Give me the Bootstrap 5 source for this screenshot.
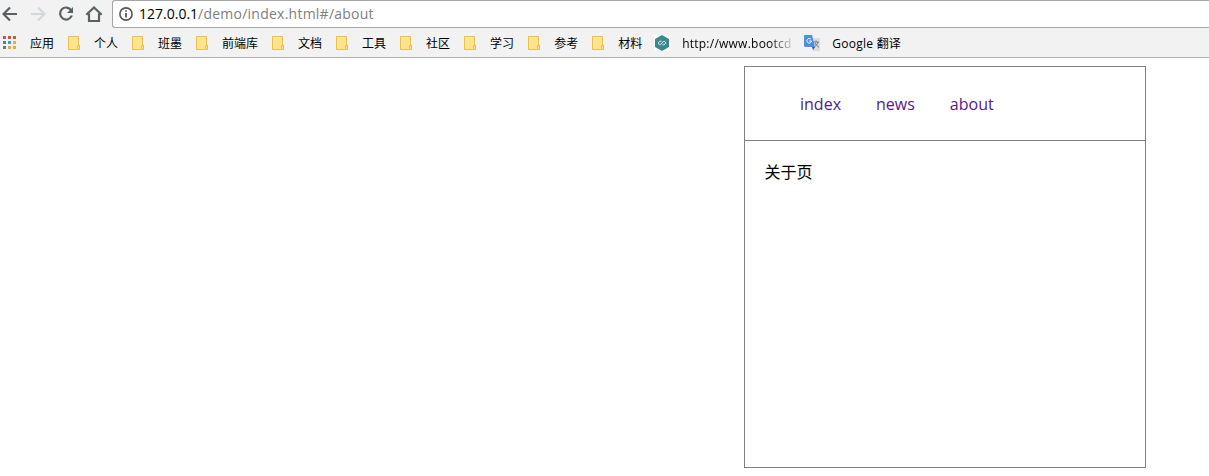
<!DOCTYPE html>
<html lang="zh-CN">
<head>
<meta charset="utf-8">
<title>index</title>
<link href="https://cdn.jsdelivr.net/npm/bootstrap@5.3.0/dist/css/bootstrap.min.css" rel="stylesheet">
<style>
body{font-family:"Open Sans","Noto Sans CJK SC",sans-serif;color:#000;height:476px;overflow:hidden;background:#fff}
.chrome{background:#f2f2f2;height:58px;border-bottom:1px solid #b0b0b0}
.toolbar{height:28px}
.tools{width:112px;padding-left:2px;gap:12px}
.home{margin-left:-1px}
.omnibox{height:28px;border:1px solid #a6a6a6;border-right:0;border-radius:3px 0 0 3px;padding-left:6px;font-size:14px;line-height:26px;background:#fff}
.address{margin-left:6px;letter-spacing:0;white-space:nowrap}
.address span{color:#808080;letter-spacing:.24px}
.bookmarks{height:29px;padding-left:2px;gap:12px;font-size:12px;line-height:16px;white-space:nowrap}
.bookmark{gap:12px}
.bookmark svg{flex:none}
.bookmark span{padding-top:2px}
.fade-label{width:110px;letter-spacing:.24px;-webkit-mask-image:linear-gradient(90deg,#000 80%,rgba(0,0,0,.15));mask-image:linear-gradient(90deg,#000 80%,rgba(0,0,0,.15))}
.latin-label{letter-spacing:.3px}
.panel{width:402px;height:402px;margin:8px 0 0 744px;border:1px solid #808080}
.panel-nav{height:74px;border-bottom:1px solid #808080;padding-left:55px;gap:35px;font-size:16px;line-height:24px}
.panel-nav a{color:#551a8b;text-decoration:none}
.panel-body{padding:19px 19.500px;font-size:16px;line-height:24px}
</style>
<script src="https://cdn.jsdelivr.net/npm/bootstrap@5.3.0/dist/js/bootstrap.bundle.min.js"></script>
</head>
<body>
<svg class="d-none">
<symbol id="folder" viewBox="0 0 16 16"><path d="M2.5 1.5h10v9h1v4h-11z" fill="#ffe48f" stroke="#e8c34a"/><path d="M11.5 14.5v-4h2v4z" fill="#ffe48f" stroke="#e8c34a"/></symbol>
</svg>
<header class="chrome">
  <div class="toolbar d-flex">
    <div class="tools d-flex align-items-center flex-shrink-0">
      <svg width="16" height="16" fill="none" stroke="#5a5f61" stroke-width="2.200"><path d="M15 8H2.500M8 1.500 1.500 8 8 14.500"/></svg>
      <svg width="16" height="16" fill="none" stroke="#d3d8da" stroke-width="2.200"><path d="M1 8h12.500M8 1.500 14.500 8 8 14.500"/></svg>
      <svg width="16" height="16" fill="none" stroke="#5a5f61" stroke-width="2.200"><path d="M13.200 4.300A6 6 0 1 0 13.800 9.500"/><path d="M15 1v6H9z" fill="#5a5f61" stroke="none"/></svg>
      <svg class="home" width="18" height="16" fill="none" stroke="#5a5f61" stroke-width="2.200"><path d="M1.300 8.700 9 1.500l7.700 7.200M4 7.500V15h10V7.500"/></svg>
    </div>
    <div class="omnibox d-flex align-items-center flex-grow-1">
      <svg width="14" height="14" fill="none" stroke="#555" stroke-width="1.600"><circle cx="7" cy="7" r="6.100"/><path d="M7 6v4.500M7 3.300v1.500" stroke-width="1.800"/></svg>
      <div class="address">127.0.0.1<span>/demo/index.html#/about</span></div>
    </div>
  </div>
  <nav class="bookmarks d-flex align-items-center">
    <div class="bookmark d-flex align-items-center"><svg width="16" height="16"><path d="M1 1h3v3H1zM6 1h3v3H6zM11 1h3v3h-3z" fill="#c45a3b"/><path d="M1 6h3v3H1zM1 11h3v3H1z" fill="#3f8b8b"/><path d="M6 6h3v3H6z" fill="#4a8fe0"/><path d="M11 6h3v3h-3zM6 11h3v3H6zM11 11h3v3h-3z" fill="#eaae2c"/></svg><span>应用</span></div>
    <div class="bookmark d-flex align-items-center"><svg width="16" height="16"><use href="#folder"/></svg><span>个人</span></div>
    <div class="bookmark d-flex align-items-center"><svg width="16" height="16"><use href="#folder"/></svg><span>班墨</span></div>
    <div class="bookmark d-flex align-items-center"><svg width="16" height="16"><use href="#folder"/></svg><span>前端库</span></div>
    <div class="bookmark d-flex align-items-center"><svg width="16" height="16"><use href="#folder"/></svg><span>文档</span></div>
    <div class="bookmark d-flex align-items-center"><svg width="16" height="16"><use href="#folder"/></svg><span>工具</span></div>
    <div class="bookmark d-flex align-items-center"><svg width="16" height="16"><use href="#folder"/></svg><span>社区</span></div>
    <div class="bookmark d-flex align-items-center"><svg width="16" height="16"><use href="#folder"/></svg><span>学习</span></div>
    <div class="bookmark d-flex align-items-center"><svg width="16" height="16"><use href="#folder"/></svg><span>参考</span></div>
    <div class="bookmark d-flex align-items-center"><svg width="16" height="16"><use href="#folder"/></svg><span>材料</span></div>
    <div class="bookmark d-flex align-items-center"><svg width="16" height="16"><path d="M0 0h16v16H0z" fill="#fff"/><path d="m8 0 7 4v8l-7 4-7-4V4z" fill="#3a8890"/><path d="M7.500 6.200H5.800L4.200 8l1.300 1.700 1.300-.2 2.400-3 1.300-.2L11.800 8l-1.600 1.800H8.500" fill="none" stroke="#d9eef0"/></svg><span class="fade-label">http://www.bootcd</span></div>
    <div class="bookmark d-flex align-items-center"><svg width="16" height="16"><path d="M7 3h9v13H9z" fill="#dcdcdc"/><path d="M9 7h6M12 5.500V7M14 7c-.5 2.500-2 4-4 5M11 8c.8 2 2 3 4 4.200" stroke="#6b7a88" fill="none"/><path d="M1 0h7l3 12H1a1 1 0 0 1-1-1V1a1 1 0 0 1 1-1z" fill="#4a90e2"/><path d="M8 12h3l-2 3z" fill="#3f519c"/><path d="M7 4.300A2.300 2.300 0 1 0 7.500 6H5.300" stroke="#fff" fill="none"/></svg><span class="latin-label">Google <span style="letter-spacing:0">翻译</span></span></div>
  </nav>
</header>
<main class="panel">
  <nav class="panel-nav d-flex align-items-center"><a href="#/index">index</a><a href="#/news">news</a><a href="#/about">about</a></nav>
  <div class="panel-body">关于页</div>
</main>
</body>
</html>
